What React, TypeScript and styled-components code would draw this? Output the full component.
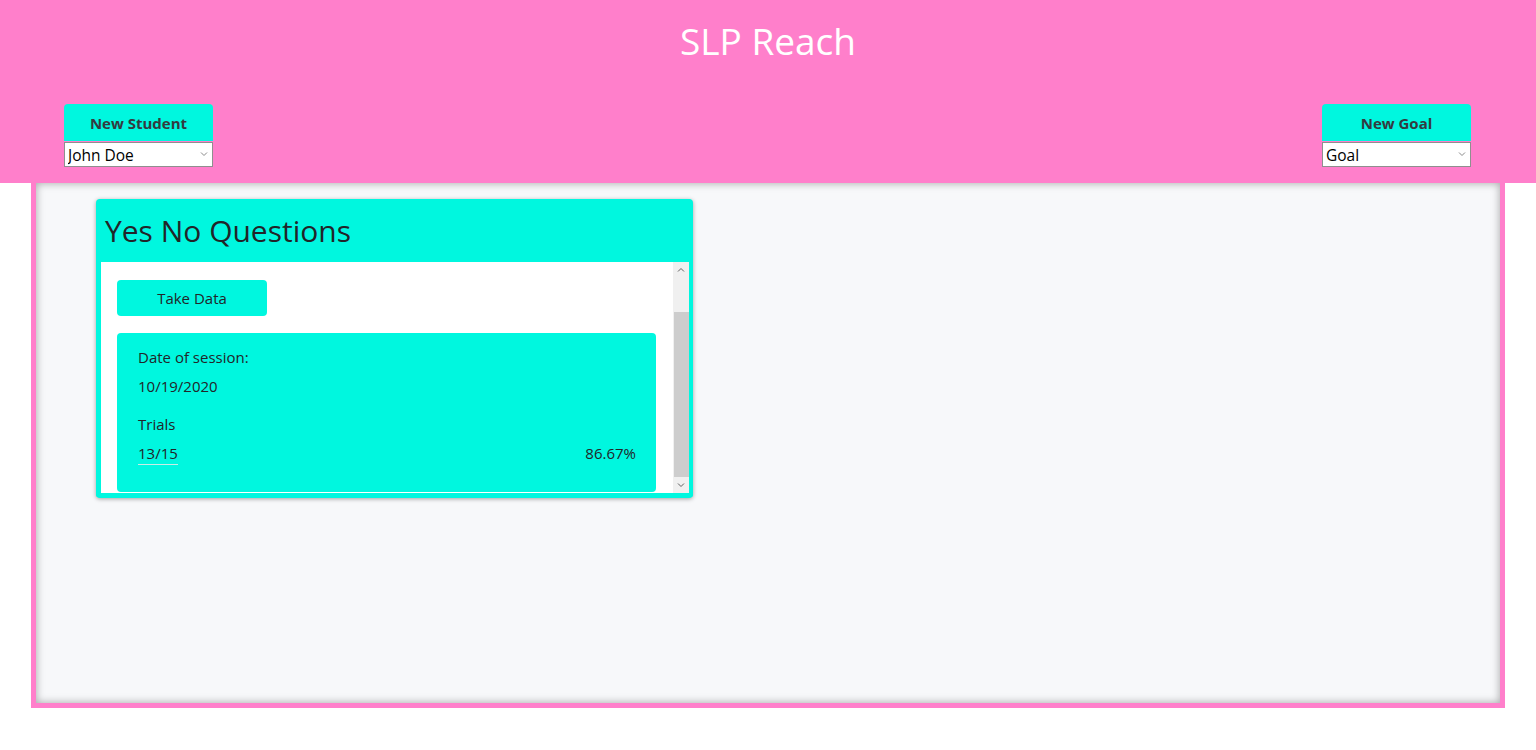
import React from "react";
import styled, { createGlobalStyle } from "styled-components";

const PINK = "#ff7fcb";
const TEAL = "#00f7df";
const INK = "#212529";

const GlobalStyle = createGlobalStyle`
	html, body {
		margin: 0;
		padding: 0;
		background: #fff;
		font-family: "Open Sans", "Noto Sans", sans-serif;
		color: ${INK};
	}
`;

const Header = styled.header`
	background: ${PINK};
	height: 183px;
	box-sizing: border-box;
	display: flex;
	flex-direction: column;
`;

const Title = styled.h1`
	margin: 14px 0 0;
	font-size: 37px;
	line-height: 54px;
	font-weight: 400;
	color: #fff;
	text-align: center;
`;

const Controls = styled.div`
	display: flex;
	justify-content: space-between;
	padding: 0 65px 0 64px;
	margin-top: 36px;
`;

const Picker = styled.div`
	display: flex;
	flex-direction: column;
	width: 149px;
	gap: 1px;
`;

const HeadButton = styled.button`
	height: 37px;
	border: none;
	border-radius: 4px 4px 0 0;
	background: ${TEAL};
	color: #343a40;
	font-family: inherit;
	font-size: 15px;
	font-weight: 700;
	padding-top: 2px;
	cursor: pointer;
`;

const SelectWrap = styled.div`
	position: relative;
	height: 25px;
`;

const Select = styled.select`
	appearance: none;
	width: 100%;
	height: 25px;
	box-sizing: border-box;
	border: 1px solid #8f8f8f;
	background: #fff;
	padding: 0 18px 0 3px;
	font-family: inherit;
	font-size: 15.5px;
	color: #000;
	outline: none;
`;

const SelectArrow = styled.svg`
	position: absolute;
	right: 5px;
	top: 9px;
	pointer-events: none;
`;

const Panel = styled.main`
	margin: 0 31px;
	height: 525px;
	box-sizing: border-box;
	border: 5px solid ${PINK};
	border-top: none;
	background: #f7f8fa;
	box-shadow: inset 0 0 8px rgba(0, 0, 0, 0.35);
	padding: 16px 60px;
`;

const Card = styled.section`
	width: 597px;
	box-sizing: border-box;
	border: 4px solid ${TEAL};
	border-left-width: 5px;
	border-top: none;
	border-bottom-width: 5px;
	border-radius: 4px;
	background: ${TEAL};
	box-shadow: 0 1px 4px rgba(0, 0, 0, 0.35);
`;

const CardTitle = styled.h2`
	margin: 0;
	height: 63px;
	display: flex;
	align-items: center;
	padding: 0 4px;
	font-size: 30px;
	font-weight: 400;
	color: ${INK};
`;

const BodyFrame = styled.div`
	display: flex;
	height: 231px;
	background: #fff;
`;

const CardBody = styled.div`
	flex: 1;
	overflow: hidden;
	padding: 18px 17px 0 16px;
	display: flex;
	flex-direction: column;
	align-items: flex-start;
	gap: 17px;
`;

const Rail = styled.div`
	width: 16px;
	display: flex;
	flex-direction: column;
	background: #f0f0f0;
`;

const RailButton = styled.div`
	height: 16px;
	display: flex;
	align-items: center;
	justify-content: center;
`;

const Track = styled.div`
	flex: 1;
	display: flex;
	flex-direction: column;
	justify-content: flex-end;
`;

const Thumb = styled.div`
	height: 165px;
	margin-left: 1px;
	background: #cdcdcd;
`;

const ActionButton = styled.button`
	flex: none;
	width: 150px;
	height: 36px;
	border: none;
	border-radius: 4px;
	background: ${TEAL};
	color: ${INK};
	font-family: inherit;
	font-size: 15px;
	cursor: pointer;
`;

const Session = styled.div`
	flex: none;
	align-self: stretch;
	background: ${TEAL};
	border-radius: 4px;
	padding: 13px 20px 27px 21px;
	display: flex;
	flex-direction: column;
	gap: 16px;
	font-size: 15px;
	line-height: 22px;
`;

const Field = styled.div`
	display: flex;
	flex-direction: column;
	gap: 7px;
`;

const Row = styled.div`
	display: flex;
	justify-content: space-between;
	align-items: flex-start;
`;

const Score = styled.span`
	border-bottom: 1px solid #c9ece6;
`;

const ArrowPath = ({ up, color }: { up?: boolean; color: string }) => (
	<path d={up ? "M1 4.5 L4 1.5 L7 4.5" : "M1 1.5 L4 4.5 L7 1.5"} fill="none" stroke={color} strokeWidth="1" />
);

const Dropdown = ({ value }: { value: string }) => (
	<SelectWrap>
		<Select defaultValue={value}>
			<option>{value}</option>
		</Select>
		<SelectArrow width="8" height="6" viewBox="0 0 8 6">
			<ArrowPath color="#8a8a8a" />
		</SelectArrow>
	</SelectWrap>
);

const Scrollbar = () => (
	<Rail>
		<RailButton>
			<svg width="8" height="6" viewBox="0 0 8 6">
				<ArrowPath up color="#606060" />
			</svg>
		</RailButton>
		<Track>
			<Thumb />
		</Track>
		<RailButton>
			<svg width="8" height="6" viewBox="0 0 8 6">
				<ArrowPath color="#606060" />
			</svg>
		</RailButton>
	</Rail>
);

export default function App() {
	return (
		<>
			<GlobalStyle />
			<Header>
				<Title>SLP Reach</Title>
				<Controls>
					<Picker>
						<HeadButton>New Student</HeadButton>
						<Dropdown value="John Doe" />
					</Picker>
					<Picker>
						<HeadButton>New Goal</HeadButton>
						<Dropdown value="Goal" />
					</Picker>
				</Controls>
			</Header>
			<Panel>
				<Card>
					<CardTitle>Yes No Questions</CardTitle>
					<BodyFrame>
						<CardBody>
							<ActionButton>Take Data</ActionButton>
							<Session>
								<Field>
									<span>Date of session:</span>
									<span>10/19/2020</span>
								</Field>
								<Field>
									<span>Trials</span>
									<Row>
										<Score>13/15</Score>
										<span>86.67%</span>
									</Row>
								</Field>
							</Session>
						</CardBody>
						<Scrollbar />
					</BodyFrame>
				</Card>
			</Panel>
		</>
	);
}
